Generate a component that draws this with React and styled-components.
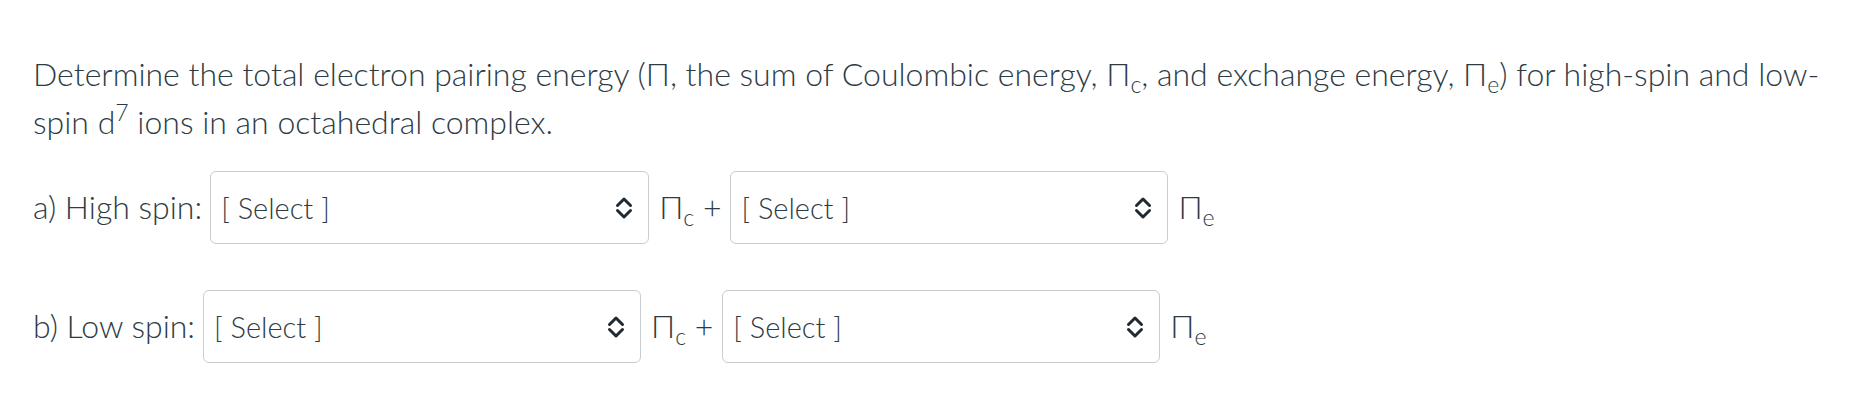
import React from "react";
import styled, { createGlobalStyle } from "styled-components";

const GlobalStyle = createGlobalStyle`
  html, body {
    margin: 0;
    padding: 0;
    background: #ffffff;
  }
  body {
    font-family: Lato, "Open Sans", "Liberation Sans", sans-serif;
    font-weight: 300;
    color: #2d3b45;
  }
`;

const Page = styled.div`
  padding: 50px 33px 0 33px;
`;

const Question = styled.p`
  margin: 0 0 25px 0;
  font-size: 32px;
  line-height: 48px;

  sub {
    font-size: 0.72em;
    line-height: 0;
    vertical-align: -0.3em;
  }
  sup {
    font-size: 0.72em;
    line-height: 0;
    vertical-align: 0.55em;
  }
`;

const Row = styled.div`
  display: flex;
  align-items: baseline;
  font-size: 32px;
  line-height: 48px;
  margin-bottom: ${(p) => p.$gap || 0}px;

  sub {
    font-size: 0.72em;
    line-height: 0;
    vertical-align: -0.32em;
  }
`;

const Label = styled.span`
  margin-right: 8px;
  white-space: nowrap;
`;

const Unit = styled.span`
  margin: 0 9px 0 10px;
  white-space: nowrap;
`;

const SelectBox = styled.div`
  display: flex;
  align-items: center;
  justify-content: space-between;
  box-sizing: border-box;
  width: ${(p) => p.$width || 438}px;
  height: 73px;
  padding: 0 13px 0 10px;
  border: 1px solid #c7cdd1;
  border-radius: 6px;
  background: #fff;
  font-size: 29px;
  line-height: 36px;
  color: #2d3b45;
  cursor: pointer;
`;

const Chevron = () => (
  <svg width="22" height="26" viewBox="0 0 22 26" fill="none">
    <path
      d="M4.5 10.5 L11 4 L17.5 10.5 M4.5 15.5 L11 22 L17.5 15.5"
      stroke="#1f2a33"
      strokeWidth="3"
      strokeLinecap="round"
      strokeLinejoin="round"
    />
  </svg>
);

function Select({ width }) {
  return (
    <SelectBox $width={width}>
      <span>[ Select ]</span>
      <Chevron />
    </SelectBox>
  );
}

export default function App() {
  return (
    <Page>
      <GlobalStyle />
      <Question>
        Determine the total electron pairing energy (Π, the sum of Coulombic
        energy, Π<sub>c</sub>, and exchange energy, Π<sub>e</sub>) for
        high-spin and low-spin d<sup>7</sup> ions in an octahedral complex.
      </Question>
      <Row $gap={46}>
        <Label>a) High spin:</Label>
        <Select width={439} />
        <Unit>
          Π<sub>c</sub> +
        </Unit>
        <Select width={438} />
        <Unit>
          Π<sub>e</sub>
        </Unit>
      </Row>
      <Row>
        <Label>b) Low spin:</Label>
        <Select width={438} />
        <Unit>
          Π<sub>c</sub> +
        </Unit>
        <Select width={438} />
        <Unit>
          Π<sub>e</sub>
        </Unit>
      </Row>
    </Page>
  );
}
